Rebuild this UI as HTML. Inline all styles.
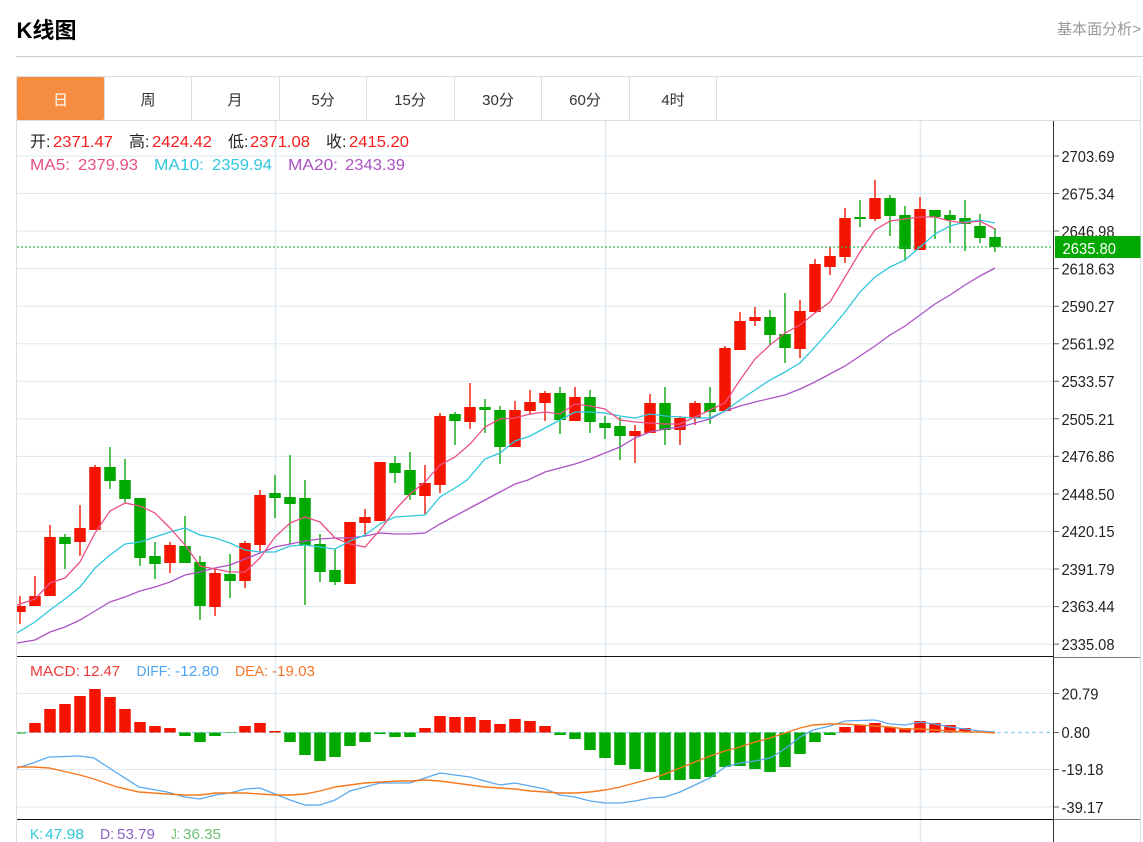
<!DOCTYPE html>
<html lang="zh">
<head>
<meta charset="utf-8">
<title>K线图</title>
<style>
html,body{margin:0;padding:0;background:#fff;width:1143px;height:842px;overflow:hidden}
svg{display:block;font-family:"Liberation Sans","Noto Sans CJK SC",sans-serif}
text{-webkit-font-smoothing:auto}
</style>
</head>
<body>
<svg width="1143" height="842" viewBox="0 0 1143 842" xmlns="http://www.w3.org/2000/svg">
<defs><clipPath id="c"><rect x="17" y="121" width="1036" height="721"/></clipPath></defs>
<rect width="1143" height="842" fill="#fff"/>

<!-- header -->
<text x="16.500" y="38" font-size="22" font-weight="700" fill="#000" textLength="60" lengthAdjust="spacingAndGlyphs">K线图</text>
<text x="1057" y="34" font-size="15" fill="#999" textLength="84" lengthAdjust="spacingAndGlyphs">基本面分析&gt;</text>
<path d="M16 56.5H1143" stroke="#ccc" fill="none"/>

<!-- frame and tabs -->
<path d="M16.5 76V842M16 76.5H1140.5V842M16 120.5H1140.5" stroke="#dedede" fill="none"/>
<path d="M104.5 77V120M191.5 77V120M279.5 77V120M366.5 77V120M454.5 77V120M541.5 77V120M629.5 77V120M716.5 77V120" stroke="#dedede" fill="none"/>
<rect x="17" y="77" width="87" height="43" rx="1.5" fill="#f58c40"/>
<g font-size="15" fill="#333" text-anchor="middle">
<text x="60.500" y="105" fill="#fff">日</text>
<text x="148" y="105">周</text>
<text x="235" y="105">月</text>
<text x="323" y="105">5分</text>
<text x="410" y="105">15分</text>
<text x="498" y="105">30分</text>
<text x="585" y="105">60分</text>
<text x="673" y="105">4时</text>
</g>

<!-- grid -->
<path d="M17 156H1053M17 193.55H1053M17 231.1H1053M17 268.65H1053M17 306.2H1053M17 343.75H1053M17 381.3H1053M17 418.85H1053M17 456.4H1053M17 493.95H1053M17 531.5H1053M17 569.05H1053M17 606.6H1053M17 644.15H1053M17 693.5H1053M17 769.5H1053M17 807H1053" stroke="#dde8f0" fill="none"/>
<path d="M275.500 121V842M605.500 121V842M920.500 121V842" stroke="#e3ebf2" stroke-width="1.600" fill="none"/>

<g clip-path="url(#c)" fill="none">
<!-- candle wicks -->
<path stroke="#f51400" stroke-width="1.400" d="M20 596V624M35 576V606M50 525V596M80 505V556M95 465V530M170 542V573M215 569V616M245 541V588M260 490V553M350 522V584M365 509V535M380 462V521M425 465V514M440 413V493M470 383V429M515 401V447M530 390V415M545 391V421M575 387V421M635 425V463M650 394V433M680 416V445M695 401V425M725 346V411M740 312V350M755 307V326M800 300V358M815 259V313M830 247V275M845 208V263M875 180V221M920 197V250"/>
<path stroke="#0aa80a" stroke-width="1.400" d="M65 534V569M110 447V489M125 459V503M140 498V566M155 542V579M185 516V563M200 556V620M230 554V598M275 475V518M290 455V544M305 480V605M320 534V582M335 549V585M395 456V483M410 452V500M455 412V445M485 399V433M500 406V464M560 387V434M590 390V433M605 416V439M620 417V460M665 387V445M710 387V424M770 310V345M785 293V363M860 200V227M890 195V236M905 206V261M935 210V239M950 210V243M965 200V251M980 214V243M995 228V252"/>
<!-- candle bodies -->
<path stroke="#f51400" stroke-width="11.500" d="M20 606V612M35 596V606M50 537V596M80 528V542M95 467V530M170 545V563M215 573V607M245 543V581M260 495V545M350 522V584M365 517V523M380 462V521M425 483V496M440 416V485M470 407V422M515 410V447M530 402V411M545 393V403M575 397V421M635 431V436M650 403V433M680 418V430M695 403V418M725 348V411M740 321V350M755 317V321M800 311V349M815 264V312M830 256V267M845 218V257M875 198V219M920 209V250"/>
<path stroke="#00a800" stroke-width="11.500" d="M65 537V544M110 467V481M125 480V499M140 498V558M155 556V564M185 546V563M200 562V606M230 574V581M275 493V498M290 497V504M305 498V545M320 544V572M335 570V582M395 463V473M410 470V495M455 414V421M485 407V410M500 410V447M560 393V420M590 397V422M605 423V428M620 426V436M665 403V430M710 403V412M770 317V335M785 334V348M860 217V219M890 198V216M905 215V249M935 210V217M950 215V220M965 218V224M980 226V238M995 237V247"/>

<!-- moving averages -->
<polyline stroke="#ad52c4" stroke-width="1.300" points="17,643 35,640 50,632 65,627 80,620 95,611 110,602 125,597 140,591 155,587 170,582 185,575 200,572 215,568 230,565 245,559 260,553 275,547 290,544 305,541 320,539 335,538 350,538 365,536 380,533 395,534 410,534 425,533 440,524 455,516 470,508 485,500 500,492 515,484 528,480 545,472 560,468 575,464 590,459 605,453 620,447 635,438 650,432 665,429 680,427 695,423 710,419 725,411 740,406 755,402 785,395 800,389 815,382 830,374 845,366 860,356 875,346 890,335 905,326 920,315 935,304 950,295 965,285 980,276 995,268"/>
<polyline stroke="#2ec7dd" stroke-width="1.300" points="17,633 35,622 50,610 65,599 80,587 95,568 110,555 125,544 140,542 155,537 170,532 185,528 200,535 215,538 230,543 245,550 260,552 275,552 290,546 305,545 320,547 335,549 350,541 365,535 380,524 395,517 410,516 425,515 440,497 455,488 467,480 485,459 500,453 515,441 530,436 545,428 560,420 575,412 590,412 605,413 620,416 635,418 650,414 665,416 680,417 695,418 710,418 725,411 740,400 755,390 770,380 785,372 800,363 815,347 830,330 845,312 860,292 875,277 890,267 905,260 920,247 935,234 950,226 965,222 980,220 995,223"/>
<polyline stroke="#ec4f86" stroke-width="1.300" points="17,605 35,599 50,583 65,578 80,562 95,533 110,511 125,503 140,506 155,513 170,528 185,545 200,566 215,569 230,572 245,572 260,558 275,537 290,523 305,517 320,522 335,538 350,544 365,547 380,530 395,510 410,494 425,482 440,465 455,457 470,444 485,427 500,419 515,418 530,414 545,412 560,414 575,404 590,406 605,409 620,420 635,422 650,423 665,424 680,424 695,417 710,410 725,403 740,380 755,359 770,345 785,333 800,325 815,313 830,302 845,277 860,252 875,230 890,221 905,219 920,217 935,217 950,221 965,223 980,221 995,229"/>
<path d="M17 247H1053" stroke="#35b84a" stroke-width="1.200" stroke-dasharray="2 2"/>

<!-- MACD -->
<path d="M17 732.500H1053" stroke="#8fd4f2" stroke-width="1.200" stroke-dasharray="4 3"/>
<path stroke="#f51400" stroke-width="11.500" d="M35 732.500V723M50 732.500V709M65 732.500V704M80 732.500V696M95 732.500V689M110 732.500V697M125 732.500V709M140 732.500V722M155 732.500V726M170 732.500V728M245 732.500V726M260 732.500V723M275 732.500V731M425 732.500V728M440 732.500V716M455 732.500V717M470 732.500V717M485 732.500V720M500 732.500V724M515 732.500V719M530 732.500V721M545 732.500V726M845 732.500V727M860 732.500V725M875 732.500V723M890 732.500V727M905 732.500V728M920 732.500V721M935 732.500V723M950 732.500V725M965 732.500V728"/>
<path stroke="#00a800" stroke-width="11.500" d="M20 732.500V733.500M185 732.500V736M200 732.500V742M215 732.500V736M230 732.500V733M290 732.500V742M305 732.500V755M320 732.500V761M335 732.500V757M350 732.500V746M365 732.500V742M380 732.500V734M395 732.500V737M410 732.500V737M560 732.500V735M575 732.500V739M590 732.500V750M605 732.500V758M620 732.500V765M635 732.500V769M650 732.500V772M665 732.500V780M680 732.500V780M695 732.500V779M710 732.500V777M725 732.500V767M740 732.500V766M755 732.500V769M770 732.500V772M785 732.500V767M800 732.500V754M815 732.500V742M830 732.500V735"/>
<polyline stroke="#5aa9f0" stroke-width="1.300" points="17,768 33,763 49,757 80,756 94,758 117,773 139,787 167,792 185,797 200,799 215,795 230,793 245,789 260,788 275,794 290,800 305,805 320,805 335,800 350,791 365,787 380,783 400,783 410,783 425,778 440,773 455,775 470,777 485,781 500,785 515,783 530,786 545,789 560,795 575,797 590,801 605,803 620,803 635,801 650,798 665,797 680,792 695,785 710,778 725,767 740,763 755,761 770,758 780,752 790,745 800,737 813,730 830,726 845,721 875,720 890,724 905,725 920,722 935,724 950,727 965,729 980,731 995,732"/>
<polyline stroke="#f57a1f" stroke-width="1.400" points="17,767 33,767 49,768 80,775 94,779 117,787 139,792 167,794 185,795 200,795 215,793 230,793 245,793 260,794 275,795 290,795 305,794 320,791 335,787 350,785 365,783 380,782 400,781 410,781 425,780 440,781 455,783 470,785 485,787 500,788 515,789 530,791 545,792 560,793 575,793 590,792 605,790 620,787 635,783 650,779 665,774 680,768 695,762 710,756 725,751 740,747 755,742 770,738 785,733 800,728 813,725 830,724 845,724 875,726 890,727 905,729 920,729 935,730 950,731 965,732 980,732 995,733"/>
</g>

<!-- separators and axis -->
<path d="M17 656.500H1053M17 819.500H1053" stroke="#111" fill="none"/>
<path d="M1053 657.500H1140M1053 819.500H1140" stroke="#777" fill="none"/>
<path d="M1053.500 121V842" stroke="#333" fill="none"/>
<path d="M1054 156H1059M1054 193.5H1059M1054 231H1059M1054 268.600H1059M1054 306.200H1059M1054 343.700H1059M1054 381.300H1059M1054 418.800H1059M1054 456.400H1059M1054 494H1059M1054 531.500H1059M1054 569H1059M1054 606.600H1059M1054 644.100H1059M1054 693.500H1059M1054 732.500H1059M1054 769.500H1059M1054 807H1059" stroke="#666" fill="none"/>

<!-- axis labels -->
<g font-size="16" fill="#222" lengthAdjust="spacingAndGlyphs">
<text x="1061.500" y="162" textLength="53" lengthAdjust="spacingAndGlyphs">2703.69</text>
<text x="1061.500" y="199.500" textLength="53" lengthAdjust="spacingAndGlyphs">2675.34</text>
<text x="1061.500" y="237" textLength="53" lengthAdjust="spacingAndGlyphs">2646.98</text>
<text x="1061.500" y="274.500" textLength="53" lengthAdjust="spacingAndGlyphs">2618.63</text>
<text x="1061.500" y="312" textLength="53" lengthAdjust="spacingAndGlyphs">2590.27</text>
<text x="1061.500" y="349.500" textLength="53" lengthAdjust="spacingAndGlyphs">2561.92</text>
<text x="1061.500" y="387" textLength="53" lengthAdjust="spacingAndGlyphs">2533.57</text>
<text x="1061.500" y="425" textLength="53" lengthAdjust="spacingAndGlyphs">2505.21</text>
<text x="1061.500" y="462" textLength="53" lengthAdjust="spacingAndGlyphs">2476.86</text>
<text x="1061.500" y="500" textLength="53" lengthAdjust="spacingAndGlyphs">2448.50</text>
<text x="1061.500" y="537" textLength="53" lengthAdjust="spacingAndGlyphs">2420.15</text>
<text x="1061.500" y="575" textLength="53" lengthAdjust="spacingAndGlyphs">2391.79</text>
<text x="1061.500" y="612" textLength="53" lengthAdjust="spacingAndGlyphs">2363.44</text>
<text x="1061.500" y="650" textLength="53" lengthAdjust="spacingAndGlyphs">2335.08</text>
<text x="1061.500" y="699.500" textLength="37" lengthAdjust="spacingAndGlyphs">20.79</text>
<text x="1061.500" y="738" textLength="28.500" lengthAdjust="spacingAndGlyphs">0.80</text>
<text x="1061.500" y="775" textLength="42" lengthAdjust="spacingAndGlyphs">-19.18</text>
<text x="1061.500" y="813" textLength="42" lengthAdjust="spacingAndGlyphs">-39.17</text>
</g>
<rect x="1055" y="236" width="85.500" height="22" fill="#00a800"/>
<text x="1062.500" y="254" font-size="16" fill="#fff" textLength="53.500" lengthAdjust="spacingAndGlyphs">2635.80</text>

<!-- legends -->
<g font-size="16">
<g fill="#222">
<text x="30" y="147">开:</text>
<text x="129" y="147">高:</text>
<text x="228" y="147">低:</text>
<text x="326" y="147">收:</text>
</g>
<g fill="#f51c1c">
<text x="53" y="147" textLength="60" lengthAdjust="spacingAndGlyphs">2371.47</text>
<text x="152" y="147" textLength="60" lengthAdjust="spacingAndGlyphs">2424.42</text>
<text x="250" y="147" textLength="60" lengthAdjust="spacingAndGlyphs">2371.08</text>
<text x="349" y="147" textLength="60" lengthAdjust="spacingAndGlyphs">2415.20</text>
</g>
<g fill="#ea4e85">
<text x="30" y="170" textLength="40" lengthAdjust="spacingAndGlyphs">MA5:</text>
<text x="78" y="170" textLength="60" lengthAdjust="spacingAndGlyphs">2379.93</text>
</g>
<g fill="#2ec7dd">
<text x="154" y="170" textLength="50" lengthAdjust="spacingAndGlyphs">MA10:</text>
<text x="212" y="170" textLength="60" lengthAdjust="spacingAndGlyphs">2359.94</text>
</g>
<g fill="#ad52c4">
<text x="288" y="170" textLength="50" lengthAdjust="spacingAndGlyphs">MA20:</text>
<text x="345" y="170" textLength="60" lengthAdjust="spacingAndGlyphs">2343.39</text>
</g>
</g>
<g font-size="15">
<text x="30" y="676" fill="#f03a3a" textLength="50" lengthAdjust="spacingAndGlyphs">MACD:</text>
<text x="83" y="676" fill="#f03a3a" textLength="37" lengthAdjust="spacingAndGlyphs">12.47</text>
<text x="136.500" y="676" fill="#4ea5f0" textLength="34.500" lengthAdjust="spacingAndGlyphs">DIFF:</text>
<text x="175" y="676" fill="#4ea5f0" textLength="44" lengthAdjust="spacingAndGlyphs">-12.80</text>
<text x="235" y="676" fill="#f5762a" textLength="33" lengthAdjust="spacingAndGlyphs">DEA:</text>
<text x="272" y="676" fill="#f5762a" textLength="43" lengthAdjust="spacingAndGlyphs">-19.03</text>
<text x="30" y="839" fill="#2ec7d6" textLength="13" lengthAdjust="spacingAndGlyphs">K:</text>
<text x="45" y="839" fill="#2ec7d6" textLength="39" lengthAdjust="spacingAndGlyphs">47.98</text>
<text x="100" y="839" fill="#8e62c4" textLength="14" lengthAdjust="spacingAndGlyphs">D:</text>
<text x="117" y="839" fill="#8e62c4" textLength="38" lengthAdjust="spacingAndGlyphs">53.79</text>
<text x="171" y="839" fill="#6fbf73" textLength="9" lengthAdjust="spacingAndGlyphs">J:</text>
<text x="183" y="839" fill="#6fbf73" textLength="38" lengthAdjust="spacingAndGlyphs">36.35</text>
</g>
</svg>
</body>
</html>
